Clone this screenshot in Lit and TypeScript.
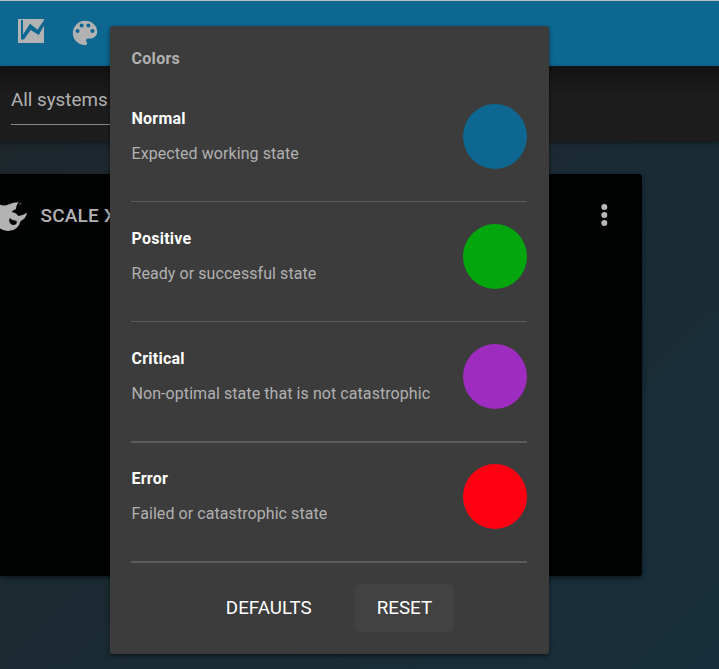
import { LitElement, html, css } from "lit";
import { customElement } from "lit/decorators.js";

interface StateColor {
  name: string;
  description: string;
  color: string;
}

const STATES: StateColor[] = [
  { name: "Normal", description: "Expected working state", color: "#0d6791" },
  { name: "Positive", description: "Ready or successful state", color: "#04a60d" },
  { name: "Critical", description: "Non-optimal state that is not catastrophic", color: "#9f2cc0" },
  { name: "Error", description: "Failed or catastrophic state", color: "#ff0012" },
];

@customElement("color-dialog")
export class ColorDialog extends LitElement {
  static styles = css`
    :host {
      display: flex;
      flex-direction: column;
      box-sizing: border-box;
      width: 439px;
      height: 628px;
      padding: 19px 22px 22px 21px;
      border-radius: 3px;
      background: #3c3c3c;
      color: #b1b1b1;
      box-shadow: 0 2px 4px rgba(0, 0, 0, 0.5);
      font-size: 16px;
      line-height: 28px;
    }
    .heading {
      height: 37px;
      font-weight: 700;
      letter-spacing: 0.3px;
      margin: 0 0 0 0.5px;
      font-size: 16px;
    }
    .row {
      display: flex;
      justify-content: space-between;
      box-sizing: border-box;
      height: 120px;
      padding-top: 22px;
      border-bottom: 1px solid #5b5b5b;
    }
    .row.thick {
      height: 121px;
      border-bottom-width: 2px;
    }
    .row.thick + .row.thick {
      height: 120px;
      padding-top: 21px;
    }
    .text {
      padding: 1px 0 0 0.5px;
    }
    .name {
      color: #fff;
      font-weight: 700;
      letter-spacing: 0.25px;
    }
    .description {
      margin-top: 7px;
      letter-spacing: 0.07px;
    }
    .swatch {
      width: 64px;
      height: 65px;
      border-radius: 50%;
    }
    .actions {
      display: flex;
      justify-content: center;
      gap: 21px;
      margin-top: 21px;
    }
    .action {
      border: 0;
      padding: 1px 22px 0;
      height: 48px;
      border-radius: 5px;
      background: transparent;
      color: #fff;
      font: 400 18.8px/47px Roboto, sans-serif;
    }
    .action.focused {
      background: #424242;
    }
  `;

  render() {
    return html`
      <h2 class="heading">Colors</h2>
      ${STATES.map(
        (s, i) => html`
          <div class="row ${i > 1 ? "thick" : ""}">
            <div class="text">
              <div class="name">${s.name}</div>
              <div class="description">${s.description}</div>
            </div>
            <div class="swatch" style="background:${s.color}"></div>
          </div>
        `
      )}
      <div class="actions">
        <button class="action">DEFAULTS</button>
        <button class="action focused">RESET</button>
      </div>
    `;
  }
}

@customElement("app-root")
export class AppRoot extends LitElement {
  static styles = css`
    :host {
      display: flex;
      flex-direction: column;
      position: relative;
      height: 669px;
      overflow: hidden;
      background: linear-gradient(135deg, #1f262b 0%, #1b2a32 50%, #172f3c 100%);
      font-family: Roboto, sans-serif;
      color: #b2b2b2;
    }
    .toolbar {
      display: flex;
      box-sizing: border-box;
      height: 66px;
      flex: none;
      border-top: 1px solid #b8c2c8;
      background: #0d6791;
      padding: 18px 0 0 18px;
      gap: 28px;
    }
    .toolbar svg {
      display: block;
    }
    .palette {
      margin-top: 1px;
    }
    .filters {
      box-sizing: border-box;
      height: 75px;
      flex: none;
      padding: 16px 11px 0;
      background: linear-gradient(#121212, #1c1c1c 28px, #1d1d1d);
      box-shadow: 0 2px 5px rgba(0, 0, 0, 0.4);
    }
    .select {
      box-sizing: border-box;
      width: 200px;
      height: 43px;
      border-bottom: 1px solid #8b8b8b;
      font-size: 18.8px;
      line-height: 36px;
    }
    .card {
      display: flex;
      align-items: flex-start;
      box-sizing: border-box;
      width: 642px;
      height: 402px;
      margin-top: 33px;
      padding: 24px 26px 0 0;
      border-radius: 0 3px 3px 0;
      background: #010202;
      box-shadow: 0 2px 5px rgba(0, 0, 0, 0.5);
    }
    .title {
      flex: 1;
      margin-left: 12.5px;
      font-size: 19px;
      font-weight: 500;
      line-height: 35px;
      letter-spacing: 0.2px;
    }
    .logo {
      margin-top: 2px;
    }
    .more {
      margin-top: 5px;
    }
    color-dialog {
      position: absolute;
      left: 110px;
      top: 26px;
    }
  `;

  render() {
    return html`
      <header class="toolbar">
        <svg width="26" height="24" viewBox="0 0 26 24">
          <path fill="#b2b2b2" d="M0 0H26V24H0Z" />
          <path fill="#0d6791" d="M3 1H5V15.5L12 4.8L19.6 10.8L26 1V6.5L20.8 16L12.6 11L6 20.5H3Z" />
        </svg>
        <svg class="palette" width="26" height="26" viewBox="2.4 2.4 19.2 19.2">
          <path fill="#b2b2b2" d="M12 3a9 9 0 0 0 0 18c.83 0 1.5-.67 1.5-1.5 0-.39-.15-.74-.39-1.01-.23-.26-.38-.61-.38-.99 0-.83.67-1.5 1.5-1.5H16c2.76 0 5-2.24 5-5 0-4.42-4.03-8-9-8zm-5.5 9a1.5 1.5 0 1 1 0-3 1.5 1.5 0 0 1 0 3zm3-4a1.5 1.5 0 1 1 0-3 1.5 1.5 0 0 1 0 3zm5 0a1.5 1.5 0 1 1 0-3 1.5 1.5 0 0 1 0 3zm3 4a1.5 1.5 0 1 1 0-3 1.5 1.5 0 0 1 0 3z" />
        </svg>
      </header>
      <div class="filters"><div class="select">All systems</div></div>
      <main class="card">
        <svg class="logo" width="28" height="32" viewBox="0 0 28 32">
          <path
            fill="#b2b2b2"
            d="M0 4.5Q4 6.5 9 4.2Q13 2.3 18.6 2.3Q16 5 15.8 9.2Q13 9.8 11.5 12Q16 12.5 18.4 16Q23 15.5 27 12.8Q26.2 18.5 20.5 21.2Q18.2 30 9.5 30.8Q4 31.3 0 28.5ZM9.8 18Q8.2 21.5 11 24.3Q13.5 26 16.3 24Q17 22.5 16.6 20.7Q12.5 21 9.8 18Z"
          />
          <circle cx="20.4" cy="3.6" r="0.9" fill="#666" />
        </svg>
        <div class="title">SCALE X</div>
        <svg class="more" width="24" height="24" viewBox="0 0 24 24" fill="#b8b8b8">
          <circle cx="12.3" cy="4" r="3" /><circle cx="12.3" cy="12" r="3" /><circle cx="12.3" cy="20" r="3" />
        </svg>
      </main>
      <color-dialog></color-dialog>
    `;
  }
}
